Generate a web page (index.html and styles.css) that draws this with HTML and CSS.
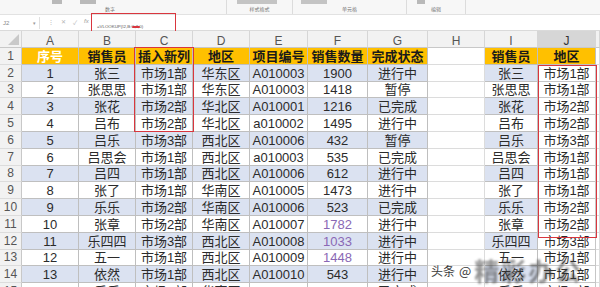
FILE: index.html
```html
<!DOCTYPE html>
<html lang="zh">
<head>
<meta charset="utf-8">
<title>VLOOKUP</title>
<link rel="stylesheet" href="styles.css">
</head>
<body>
<div class="app">
  <div class="ribbon">
    <div class="grp g1"><span class="ico i1"></span><span class="ico i2"></span><span class="lbl">数字</span></div>
    <div class="grp g2"><span class="ico i3"></span><span class="lbl">样式格式</span></div>
    <div class="grp g3"><span class="ico i4"></span><span class="lbl">单元格</span></div>
    <div class="grp g4"><span class="ico i5"></span><span class="lbl">编辑</span></div>
    <div class="grp g5"></div>
  </div>
  <div class="fbar">
    <div class="namebox"><span>J2</span><span class="dd">▾</span></div>
    <div class="fbtns"><span class="dots">⋮</span><span>✕</span><span>✓</span><span class="fx">fx</span></div>
    <div class="finput"><span class="ftext">=VLOOKUP(I2,B:C,2,0)</span></div>
    <div class="hl-formula"><span class="mark"></span></div>
  </div>
  <div class="sheet">
    <div class="row colhead">
      <div class="corner"></div><div class="ch">A</div><div class="ch">B</div><div class="ch">C</div><div class="ch">D</div><div class="ch">E</div><div class="ch">F</div><div class="ch">G</div><div class="ch">H</div><div class="ch">I</div><div class="ch sel">J</div><div class="ch"></div>
    </div>
    <div class="row head">
      <div class="rn">1</div><div class="t wh">序号</div><div class="t">销售员</div><div class="t">插入新列</div><div class="t">地区</div><div class="t">项目编号</div><div class="t">销售数量</div><div class="t">完成状态</div><div class="e"></div><div class="t">销售员</div><div class="t">地区</div><div class="e"></div>
    </div>
    <div class="row even">
      <div class="rn">2</div><div class="t">1</div><div class="t">张三</div><div class="t">市场1部</div><div class="t">华东区</div><div class="t">A010003</div><div class="t">1900</div><div class="t">进行中</div><div class="e"></div><div class="t">张三</div><div class="j">市场1部</div><div class="e"></div>
    </div>
    <div class="row">
      <div class="rn">3</div><div class="t">2</div><div class="t">张思思</div><div class="t">市场1部</div><div class="t">华东区</div><div class="t">A010003</div><div class="t">1418</div><div class="t">暂停</div><div class="e"></div><div class="t">张思思</div><div class="j">市场1部</div><div class="e"></div>
    </div>
    <div class="row even">
      <div class="rn">4</div><div class="t">3</div><div class="t">张花</div><div class="t">市场2部</div><div class="t">华北区</div><div class="t">A010001</div><div class="t">1216</div><div class="t">已完成</div><div class="e"></div><div class="t">张花</div><div class="j">市场2部</div><div class="e"></div>
    </div>
    <div class="row">
      <div class="rn">5</div><div class="t">4</div><div class="t">吕布</div><div class="t">市场2部</div><div class="t">华北区</div><div class="t">a010002</div><div class="t">1495</div><div class="t">进行中</div><div class="e"></div><div class="t">吕布</div><div class="j">市场2部</div><div class="e"></div>
    </div>
    <div class="row even">
      <div class="rn">6</div><div class="t">5</div><div class="t">吕乐</div><div class="t">市场3部</div><div class="t">西北区</div><div class="t">A010006</div><div class="t">432</div><div class="t">暂停</div><div class="e"></div><div class="t">吕乐</div><div class="j">市场3部</div><div class="e"></div>
    </div>
    <div class="row">
      <div class="rn">7</div><div class="t">6</div><div class="t">吕思会</div><div class="t">市场1部</div><div class="t">西北区</div><div class="t">a010003</div><div class="t">535</div><div class="t">已完成</div><div class="e"></div><div class="t">吕思会</div><div class="j">市场1部</div><div class="e"></div>
    </div>
    <div class="row even">
      <div class="rn">8</div><div class="t">7</div><div class="t">吕四</div><div class="t">市场1部</div><div class="t">西北区</div><div class="t">A010006</div><div class="t">612</div><div class="t">进行中</div><div class="e"></div><div class="t">吕四</div><div class="j">市场1部</div><div class="e"></div>
    </div>
    <div class="row">
      <div class="rn">9</div><div class="t">8</div><div class="t">张了</div><div class="t">市场1部</div><div class="t">华南区</div><div class="t">A010005</div><div class="t">1473</div><div class="t">进行中</div><div class="e"></div><div class="t">张了</div><div class="j">市场1部</div><div class="e"></div>
    </div>
    <div class="row even">
      <div class="rn">10</div><div class="t">9</div><div class="t">乐乐</div><div class="t">市场2部</div><div class="t">华南区</div><div class="t">A010006</div><div class="t">523</div><div class="t">已完成</div><div class="e"></div><div class="t">乐乐</div><div class="j">市场2部</div><div class="e"></div>
    </div>
    <div class="row">
      <div class="rn">11</div><div class="t">10</div><div class="t">张章</div><div class="t">市场2部</div><div class="t">华南区</div><div class="t">A010007</div><div class="t purple">1782</div><div class="t">进行中</div><div class="e"></div><div class="t">张章</div><div class="j">市场2部</div><div class="e"></div>
    </div>
    <div class="row even">
      <div class="rn">12</div><div class="t">11</div><div class="t">乐四四</div><div class="t">市场3部</div><div class="t">西北区</div><div class="t">A010008</div><div class="t purple">1033</div><div class="t">进行中</div><div class="e"></div><div class="t">乐四四</div><div class="j">市场3部</div><div class="e"></div>
    </div>
    <div class="row">
      <div class="rn">13</div><div class="t">12</div><div class="t">五一</div><div class="t">市场1部</div><div class="t">西北区</div><div class="t">A010009</div><div class="t purple">1448</div><div class="t">进行中</div><div class="e"></div><div class="t">五一</div><div class="j">市场1部</div><div class="e"></div>
    </div>
    <div class="row even">
      <div class="rn">14</div><div class="t">13</div><div class="t">依然</div><div class="t">市场1部</div><div class="t">西北区</div><div class="t">A010010</div><div class="t">543</div><div class="t">进行中</div><div class="e"></div><div class="t">依然</div><div class="j">市场1部</div><div class="e"></div>
    </div>
    <div class="row">
      <div class="rn">15</div><div class="t">14</div><div class="t">乐乐</div><div class="t">市场1部</div><div class="t">华南区</div><div class="t">A010011</div><div class="t">1602</div><div class="t">已完成</div><div class="e"></div><div class="t">乐乐</div><div class="j">市场1部</div><div class="e"></div>
    </div>
    <div class="hl hl-c"></div>
    <div class="hl hl-j"></div>
  </div>
  <div class="watermark"><span class="wm-small">头条</span><span class="wm-at">@</span><span class="wm-big">精彩办公</span></div>
</div>
</body>
</html>
```

FILE: styles.css
```css
* { box-sizing: border-box; }
html, body { margin: 0; padding: 0; }
body {
  width: 600px;
  height: 287px;
  overflow: hidden;
  background: #ffffff;
  font-family: "Liberation Sans", "Noto Sans CJK SC", sans-serif;
  color: #2b2b2b;
}
.app { position: relative; width: 600px; height: 287px; overflow: hidden; }

/* ribbon */
.ribbon {
  height: 15px;
  display: flex;
  background: #f7f7f7;
  border-bottom: 1px solid #e2e2e2;
}
.grp {
  position: relative;
  height: 100%;
  border-right: 1px solid #dcdcdc;
}
.g1 { width: 227px; }
.g2 { width: 66px; }
.g3 { width: 114px; }
.g4 { width: 59px; }
.g5 { flex: 1; border-right: none; }
.lbl {
  position: absolute;
  bottom: 2px;
  left: 0; right: 0;
  text-align: center;
  font-size: 5px;
  color: #777;
  font-family: "Noto Sans CJK SC", sans-serif;
}
.g1 .lbl { left: 70px; right: auto; width: 80px; }
.ico {
  position: absolute;
  top: 0;
  height: 4px;
  background: #b9b9b9;
}
.i1 { left: 52px; width: 10px; }
.i2 { left: 80px; width: 16px; }
.i3 { left: 10px; width: 40px; background: #c4c4c4; }
.i4 { left: 8px; width: 26px; background: #c4c4c4; }
.i5 { left: 10px; width: 8px; }

/* formula bar */
.fbar {
  position: relative;
  height: 16px;
  display: flex;
  align-items: center;
  background: #ffffff;
  border-bottom: 1px solid #dadada;
}
.namebox {
  width: 40px;
  height: 12px;
  display: flex;
  align-items: center;
  justify-content: space-between;
  padding: 0 3px;
  font-size: 6px;
  color: #888;
  border-right: 1px solid #e0e0e0;
}
.dd { font-size: 5px; color: #999; }
.fbtns {
  width: 54px;
  display: flex;
  gap: 7px;
  padding-left: 8px;
  font-size: 6px;
  color: #b5b5b5;
}
.fx { font-style: italic; color: #999; }
.finput { flex: 1; padding-left: 3px; }
.ftext { font-size: 4.4px; color: #555; }
.hl-formula {
  position: absolute;
  left: 91px;
  top: -2px;
  width: 85px;
  height: 19px;
  border: 1.5px solid #d9363e;
}
.mark {
  position: absolute;
  left: 40px;
  top: 12px;
  width: 8px;
  height: 2px;
  background: #d9363e;
  border-radius: 1px;
}

/* sheet */
.sheet {
  position: relative;
  display: grid;
  grid-template-columns: 22px 57px 57px 57px 57px 58px 60px 60px 57px 53px 58px 1fr;
  grid-template-rows: 17px repeat(15, 16.8px);
  font-size: 13px;
}
.row { display: contents; }
.row > div {
  display: flex;
  align-items: center;
  justify-content: center;
  white-space: nowrap;
  overflow: hidden;
  border-right: 1px solid #dcdcdc;
  border-bottom: 1px solid #dcdcdc;
  line-height: 1;
}
.colhead > div {
  background: #f2f2f2;
  color: #555;
  font-size: 12px;
  border-right: 1px solid #d6d6d6;
  border-bottom: 1px solid #c8c8c8;
  padding-top: 3px;
}
.colhead .corner { position: relative; }
.colhead .corner::after {
  content: "";
  position: absolute;
  right: 2px;
  bottom: 2px;
  border-left: 11px solid transparent;
  border-bottom: 11px solid #c9c9c9;
}
.colhead .sel { background: #d6d6d6; color: #333; }
.rn {
  background: #f2f2f2;
  color: #555;
  font-size: 12px;
  border-right: 1px solid #c8c8c8 !important;
}
.row > .t {
  border-right: 1px solid #bfbfbf;
  border-bottom: 1px solid #bfbfbf;
  padding-top: 1px;
}
.row > .j {
  border-right: 1px solid #c6c6c6;
  border-bottom: 1px solid #c6c6c6;
  padding-top: 1px;
}
.row.even > .t { background: #dbe2f1; }
.row.head > .t {
  background: #ffc000;
  color: #1a1a1a;
  font-weight: bold;
}
.row.head > .wh { color: #ffffff; }
.purple { color: #8a68b5; }

/* overlays */
.hl {
  position: absolute;
  border: 1.5px solid #d9363e;
  pointer-events: none;
}
.hl-c { left: 134px; top: 16px; width: 60px; height: 85px; }
.hl-j { left: 538px; top: 34px; width: 59px; height: 173px; }

.watermark {
  position: absolute;
  left: 431px;
  top: 257px;
  height: 26px;
  display: flex;
  align-items: center;
  font-family: "Noto Sans CJK SC", sans-serif;
}
.wm-small { font-size: 12px; color: #3a3a3a; margin-right: 4px; }
.wm-at { font-size: 13px; color: #3a3a3a; margin-right: 3px; }
.wm-big {
  font-size: 25px;
  font-weight: bold;
  color: rgba(60, 60, 60, 0.55);
  filter: blur(1.2px);
  letter-spacing: 2px;
}
```
